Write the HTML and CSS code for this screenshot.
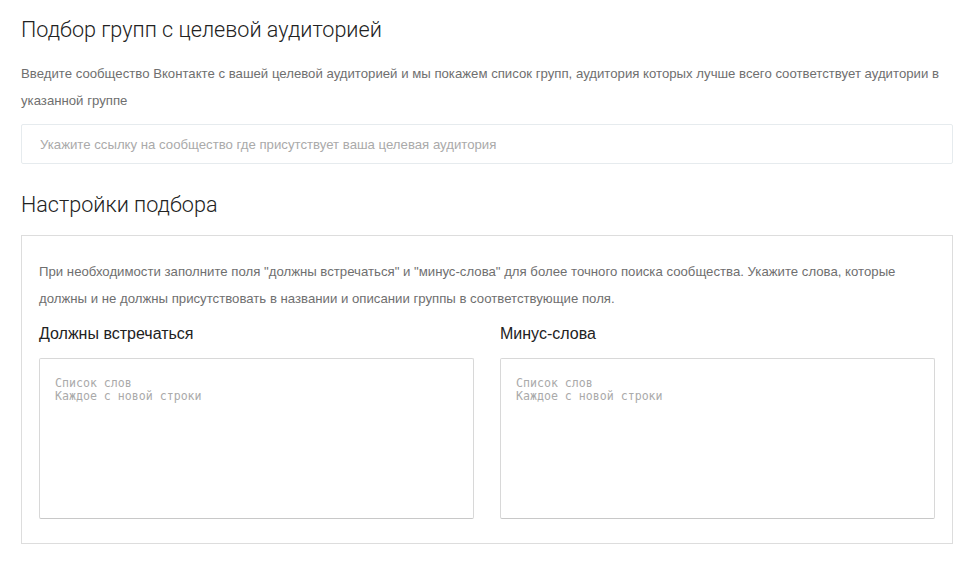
FILE: index.html
```html
<!DOCTYPE html>
<html lang="ru">
<head>
<meta charset="utf-8"/>
<title>Подбор групп</title>
<link rel="stylesheet" href="styles.css">
</head>
<body>
<div class="page">
  <h1 class="title">Подбор групп с целевой аудиторией</h1>
  <p class="hint">Введите сообщество Вконтакте с вашей целевой аудиторией и мы покажем список групп, аудитория которых лучше всего соответствует аудитории в указанной группе</p>
  <input class="link-input" type="text" placeholder="Укажите ссылку на сообщество где присутствует ваша целевая аудитория"/>

  <h2 class="title sub">Настройки подбора</h2>
  <div class="settings">
    <p class="hint">При необходимости заполните поля "должны встречаться" и "минус-слова" для более точного поиска сообщества. Укажите слова, которые должны и не должны присутствовать в названии и описании группы в соответствующие поля.</p>
    <div class="cols">
      <div class="col">
        <h3>Должны встречаться</h3>
        <textarea placeholder="Список слов&#10;Каждое с новой строки"></textarea>
      </div>
      <div class="col">
        <h3>Минус-слова</h3>
        <textarea placeholder="Список слов&#10;Каждое с новой строки"></textarea>
      </div>
    </div>
  </div>
</div>
</body>
</html>
```

FILE: styles.css
```css
body {
  margin: 0;
  background: #fff;
  font-family: "Liberation Sans", Arial, sans-serif;
  color: #333;
}

.page {
  padding: 0 17px 0 21px;
}

.title {
  margin: 0;
  padding-top: 16px;
  font-family: Roboto, sans-serif;
  font-weight: 300;
  font-size: 21.6px;
  line-height: 28px;
  color: #222;
}

.title.sub {
  padding-top: 27px;
  margin-bottom: 16px;
}

.hint {
  margin: 16px 0 10px;
  font-size: 13.2px;
  line-height: 27px;
  color: #6f6f6f;
}

.link-input {
  display: block;
  width: 100%;
  height: 40px;
  box-sizing: border-box;
  padding: 0 18px;
  border: 1px solid #e6ebee;
  border-radius: 2px;
  font-family: "Liberation Sans", Arial, sans-serif;
  font-size: 13.2px;
  color: #333;
  outline: none;
}

.link-input::placeholder {
  color: #aaa;
}

.settings {
  border: 1px solid #ddd;
  padding: 22px 17px 24px;
}

.settings .hint {
  margin: 0;
}

.cols {
  display: grid;
  grid-template-columns: 1fr 1fr;
  gap: 26px;
}

.col h3 {
  margin: 12px 0 14px;
  font-size: 16px;
  font-weight: normal;
  line-height: 20px;
  color: #222;
}

.col textarea {
  display: block;
  width: 100%;
  height: 161px;
  box-sizing: border-box;
  padding: 18px 15px;
  border: 1px solid #d8d8d8;
  border-bottom-color: #c8c8c8;
  border-radius: 2px;
  resize: none;
  font-family: "DejaVu Sans Mono", monospace;
  font-size: 11.6px;
  line-height: 13px;
  outline: none;
}

.col textarea::placeholder {
  color: #aaa;
}
```
